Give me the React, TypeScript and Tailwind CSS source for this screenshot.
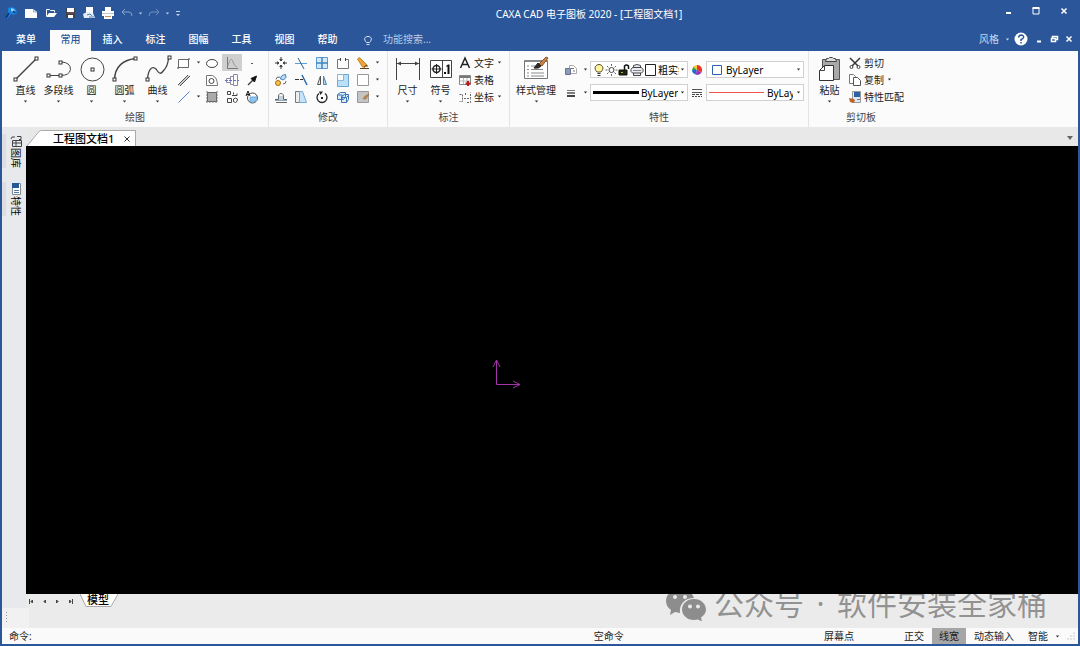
import { ReactNode } from 'react'
import clsx from 'clsx'

interface IconProps {
  w?: number
  h?: number
  children: ReactNode
}

// Base svg wrapper, one unit is one pixel
function Icon({ w = 14, h = 14, children }: IconProps) {
  return (
    <svg width={w} height={h} viewBox={`0 0 ${w} ${h}`} fill="none" stroke="#444" className="shrink-0" aria-hidden="true">
      {children}
    </svg>
  )
}

function Caret({ color = '#333' }: { color?: string }) {
  return (
    <Icon w={5} h={3}>
      <path d="M.8.5h3.400L2.500 2.500z" fill={color} stroke="none" />
    </Icon>
  )
}

/* Quick access icons */
const quickIcons: { name: string; width: string; icon: ReactNode }[] = [
  {
    name: 'CAXA',
    width: 'w-[18px]',
    icon: (
      <Icon>
        <path d="M4 2l4-1 4 2 1 4-3 2-3-1-3 4-2 1 2-6z" fill="#1583e0" stroke="none" />
        <path d="M7 2l3 1 1 2-2 1-2-1z" fill="#8fd0ff" stroke="none" />
        <path d="M2 12l3-5M9 5l2 2" stroke="#0a3577" strokeWidth="1.5" />
      </Icon>
    ),
  },
  {
    name: '新建',
    width: 'w-[22px]',
    icon: (
      <Icon>
        <path d="M1 3h8l4 3v6H1z" fill="#fff" stroke="none" />
        <path d="M9.500 3v3H13" stroke="#8fa9cf" />
      </Icon>
    ),
  },
  {
    name: '打开',
    width: 'w-[18px]',
    icon: (
      <Icon>
        <path d="M2.500 10V3.500h3l1 1h4v2" stroke="#fff" />
        <path d="M5 7h8l-3 4H2z" fill="#fff" stroke="none" />
      </Icon>
    ),
  },
  {
    name: '保存',
    width: 'w-[19px]',
    icon: (
      <Icon>
        <path d="M3 2h9v10H3z" fill="#3c4049" stroke="none" />
        <path d="M4 2h7v4H4z" fill="#fff" stroke="none" />
        <path d="M4 7h7" stroke="#93594e" />
        <path d="M5 9h5v3H5z" fill="#fff" stroke="none" />
      </Icon>
    ),
  },
  {
    name: '另存为',
    width: 'w-[19px]',
    icon: (
      <Icon>
        <path d="M4 1h7v8H4z" fill="#fff" stroke="none" />
        <path d="M1 8l4-2 6 1 2 5H2z" fill="#e4ecf9" stroke="none" />
        <path d="M5 9l3-1 2 2M7 11h5" stroke="#5b7fb5" />
      </Icon>
    ),
  },
  {
    name: '打印',
    width: 'w-[19px]',
    icon: (
      <Icon>
        <path d="M4 1h6v4H4zM1 5h12v5H1zM3 10h8v3H3z" fill="#fff" stroke="none" />
        <path d="M1 7h12v1H1z" fill="#bfc8d8" stroke="none" />
        <path d="M4 10.500h6" stroke="#c69258" />
      </Icon>
    ),
  },
  {
    name: '撤销',
    width: 'w-[19px]',
    icon: (
      <Icon>
        <path d="M5 3L2 6l3 3M2 6h7q3 0 3 4" stroke="#86a3ce" />
      </Icon>
    ),
  },
  { name: '撤销列表', width: 'w-[8px]', icon: <Caret color="#b9cae6" /> },
  {
    name: '重做',
    width: 'w-[19px]',
    icon: (
      <Icon>
        <path d="M9 3l3 3-3 3M12 6H5Q2 6 2 10" stroke="#6d8fc2" />
      </Icon>
    ),
  },
  { name: '重做列表', width: 'w-[8px]', icon: <Caret color="#b9cae6" /> },
  {
    name: '自定义',
    width: 'w-[13px]',
    icon: (
      <Icon w={6} h={8}>
        <path d="M1 2.500h4" stroke="#c9d6ec" />
        <path d="M1 5h4L3 7z" fill="#c9d6ec" stroke="none" />
      </Icon>
    ),
  },
]

/* Large drawing icons */
const node = (x: number, y: number) => <rect x={x - 1.5} y={y - 1.5} width="3" height="3" fill="#fff" stroke="#333" />

const drawTools = [
  {
    label: '直线',
    icon: (
      <Icon w={28} h={28}>
        <path d="M4 24L24 4" strokeWidth="1.500" />
        {node(3.5, 24.5)}
        {node(24.5, 3.5)}
      </Icon>
    ),
  },
  {
    label: '多段线',
    icon: (
      <Icon w={28} h={28}>
        <path d="M3.500 20.500h12q9 0 10-6 0-7-9-7.500" />
        {node(3.5, 20.5)}
        {node(15.5, 20.5)}
        {node(15.5, 7.5)}
      </Icon>
    ),
  },
  {
    label: '圆',
    icon: (
      <Icon w={28} h={28}>
        <circle cx="14.500" cy="14.500" r="11.500" />
        {node(14.5, 14.5)}
      </Icon>
    ),
  },
  {
    label: '圆弧',
    icon: (
      <Icon w={28} h={28}>
        <path d="M3.500 24.500C4 12 12 5 24.500 3.500" strokeWidth="1.500" />
        {node(3.5, 24.5)}
        {node(24.5, 3.5)}
      </Icon>
    ),
  },
  {
    label: '曲线',
    icon: (
      <Icon w={28} h={28}>
        <path d="M3.500 24.500C4 15 8 10 12 14c4 6 5 5 8 1 3-3 4-7 4.500-11.500" strokeWidth="1.300" />
        {node(3.5, 24.5)}
        {node(25.5, 2.5)}
      </Icon>
    ),
  },
]

interface SmallTool {
  name: string
  icon: ReactNode
  active?: boolean
}

const drawSmall: SmallTool[] = [
  { name: '矩形', icon: <Icon><path d="M1.500 3.500h10v8h-10z" fill="#fff" stroke="#666" /><path d="M12 2v2M1 11v2" /></Icon> },
  { name: '矩形选项', icon: <Caret /> },
  { name: '椭圆', icon: <Icon><ellipse cx="7" cy="7.500" rx="5.500" ry="4" fill="#fff" /></Icon> },
  { name: '公式曲线', active: true, icon: <Icon><path d="M2.500 1v11.500H13" stroke="#777" /><path d="M3 10C5 2 7 2 8 6q1 4 4 5" stroke="#999" /></Icon> },
  { name: '点', icon: <Icon><path d="M6 7h2v1H6z" fill="#555" stroke="none" /></Icon> },
  { name: '平行线', icon: <Icon><path d="M1 12L11 2M3 13L13 3" stroke="#555" /><path d="M2 12.500L12 2.500" stroke="#999" /></Icon> },
  { name: '', icon: null },
  { name: '等距线', icon: <Icon><path d="M1.500 12.500v-10h6q5 2 5 10z" fill="#fff" stroke="#777" /><circle cx="6.500" cy="8" r="2.500" /></Icon> },
  { name: '孔轴', icon: <Icon><path d="M1.500 5.500h4v4h-4zM5.500 3.500h3v8h-3zM8.500 1.500h4v11h-4z" fill="#fff" stroke="#8a8aa5" /><path d="M0 7.500h14" stroke="#6371c9" strokeDasharray="3 1" /></Icon> },
  { name: '箭头', icon: <Icon><path d="M3 12l5-5" strokeWidth="1.500" /><path d="M11.500 3l-2 6-3.500-3.500z" fill="#111" stroke="#111" /></Icon> },
  { name: '中心线', icon: <Icon><path d="M1.500 12.500l11-11" stroke="#4e82d4" /></Icon> },
  { name: '中心线选项', icon: <Caret /> },
  { name: '填充', icon: <Icon><path d="M2.500 2.500h9v9h-9z" fill="#aaa" stroke="#666" /><path d="M2 1v12M12 1v12M1 12h12" stroke="#777" strokeDasharray="2 1" /></Icon> },
  { name: '块', icon: <Icon><path d="M2.500 1.500h3v3h-3zM8.500 4.500v-2M7 5.500h5v-2M2.500 8.500h4v4h-4z" /><path d="M8.500 9q2-2 4 0 0 3-2 3.500-3 0-2-3.500z" /></Icon> },
  { name: '局部放大', icon: <Icon><circle cx="7.500" cy="8" r="5" fill="#fff" /><path d="M5 7h7v3l-4 2.500L5 11z" fill="#8cc5f3" stroke="#6da9dc" /><path d="M1 6l2-5 2 5M2 4.500h2" stroke="#111" /></Icon> },
]

const modifySmall: SmallTool[] = [
  { name: '平移', icon: <Icon><path d="M7 1v4M7 9v4M1 7h4M9 7h4" stroke="#333" /><path d="M5.500 3.500h3L7 5zM5.500 10.500h3L7 9zM3.500 5.500v3L5 7zM10.500 5.500v3L9 7z" fill="#333" stroke="#333" strokeWidth=".5" /></Icon> },
  { name: '裁剪', icon: <Icon><path d="M1 7.500h12" stroke="#5ba0dc" /><path d="M4 2l6 11" stroke="#345e87" /></Icon> },
  { name: '阵列', icon: <Icon><path d="M1.500 1.500h11v11h-11z" fill="#d4eafb" stroke="#5b9bd5" /><path d="M7 1v12M1 7h12" stroke="#4185bd" strokeWidth="1.500" /></Icon> },
  { name: '打断', icon: <Icon><path d="M4.500 3.500h-3v9h11v-9h-3" stroke="#777" /><path d="M4.500 2v3M9.500 2v3" stroke="#444" /></Icon> },
  { name: '删除', icon: <Icon><path d="M1.500 3l2-1.500 7 7-2 3-2-.500z" fill="#efa536" stroke="#c98225" /><path d="M8 11l3-2v2M4 12.500h9" stroke="#643f1a" /></Icon> },
  { name: '删除选项', icon: <Caret /> },
  { name: '复制', icon: <Icon><circle cx="4" cy="10" r="2.500" fill="#f9c34a" stroke="#a26b12" /><path d="M6.500 6q0-4 5-4.500 2 3-2 5.500z" fill="#b7dbf5" stroke="#4482ba" /><path d="M2 6.500q0-3 4-2.500M9 11q3 0 3-3" stroke="#666" /></Icon> },
  { name: '延伸', icon: <Icon><path d="M1 6.500h4M6 6.500h3" stroke="#333" /><path d="M8 2l5 10" stroke="#2c6daa" strokeWidth="1.500" /></Icon> },
  { name: '镜像', icon: <Icon><path d="M5.500 3v8.500h-3z" fill="#e6e9ec" stroke="#555" /><path d="M8.500 3v8.500h3z" fill="#a7d2f3" stroke="#5486ad" /></Icon> },
  { name: '缩放', icon: <Icon><path d="M1.500 1.500h11v12h-11z" fill="#b9e1fa" stroke="#6ea6cf" /><path d="M1.500 1.500h6v6h-6z" fill="#f7fbfe" stroke="#8cb6d4" /></Icon> },
  { name: '分解', icon: <Icon><path d="M1.500 1.500h11v11h-11z" fill="#fff" stroke="#999" /></Icon> },
  { name: '分解选项', icon: <Caret /> },
  { name: '偏移', icon: <Icon><path d="M1 9.500h3.500V8Q4 3.500 7 3.500T9.500 8v1.500H13M2 12.500h11" stroke="#666" /><path d="M6 6v4M8 6v4M1 10.500h12" stroke="#8ba7c3" /></Icon> },
  { name: '拉伸', icon: <Icon><path d="M1.500 1.500h4v11h-4z" stroke="#777" fill="#eee" /><path d="M5.500 1.500h3l4 11h-7z" fill="#c6e5fa" stroke="#73a9d4" /></Icon> },
  { name: '旋转', icon: <Icon><path d="M4 3.500a5 5 0 1 0 6 0" stroke="#222" strokeWidth="1.300" /><path d="M4 1.500h4L5.500 5z" fill="#222" stroke="none" /><path d="M6 7h2v2H6z" fill="#222" stroke="none" /></Icon> },
  { name: '三维', icon: <Icon><path d="M1.500 4.500l3-2h5v4l-2 3h-6zM5.500 6.500l3-2h4v5l-2 3h-5z" fill="#d8ecfb" stroke="#3c74b4" /><path d="M5.500 7.500h5v5M10.500 7.500l2-2M2 5h4v4" stroke="#3c74b4" /></Icon> },
  { name: '编辑填充', icon: <Icon><path d="M1.500 1.500h11v11h-11z" fill="#c4c4c4" stroke="#999" /><path d="M7 9l2-3 4-2-3 5z" fill="#b98a4f" stroke="#906a3b" strokeWidth=".5" /></Icon> },
  { name: '编辑填充选项', icon: <Caret /> },
]

function ToolGrid({ tools, cols }: { tools: SmallTool[]; cols: string }) {
  return (
    <div className={clsx('grid auto-rows-[17px] content-start', cols)}>
      {tools.map((tool, i) =>
        tool.icon ? (
          <button key={i} aria-label={tool.name} className={clsx('flex items-center justify-center', tool.active && 'bg-[#cfcfcf]')}>
            {tool.icon}
          </button>
        ) : (
          <span key={i} />
        )
      )}
    </div>
  )
}

function BigButton({ label, icon, width = 'w-[33px]' }: { label: string; icon: ReactNode; width?: string }) {
  return (
    <button className={clsx('flex flex-col items-center whitespace-nowrap', width)}>
      <span className="flex h-[29px] items-center">{icon}</span>
      <span className="h-[14px] leading-[14px]">{label}</span>
      <span className="pt-[3px]">
        <Caret />
      </span>
    </button>
  )
}

function RowButton({ label, icon, caret }: { label: string; icon: ReactNode; caret?: boolean }) {
  return (
    <button className="flex h-[17px] items-center gap-[3px] whitespace-nowrap">
      {icon}
      <span>{label}</span>
      {caret && <Caret />}
    </button>
  )
}

function Group({ title, width, children }: { title: string; width: string; children: ReactNode }) {
  return (
    <section className={clsx('flex shrink-0 flex-col border-r border-[#e4e4e4] pt-[3px]', width)}>
      <div className="flex h-[56px]">{children}</div>
      <h2 className="text-center leading-[14px] text-[#444]">{title}</h2>
    </section>
  )
}

interface ComboProps {
  label: string
  value: string
  lead: ReactNode
  pad?: string
}

function Combo({ label, value, lead, pad = 'gap-[4px]' }: ComboProps) {
  return (
    <label className={clsx('flex h-[17px] w-[98px] items-center border border-[#d0d0d0] bg-white px-[2px]', pad)}>
      {lead}
      <select aria-label={label} className="min-w-0 flex-1 appearance-none overflow-hidden bg-transparent text-[10px] text-black outline-none">
        <option>{value}</option>
      </select>
      <Caret />
    </label>
  )
}

const layerState = (
  <div className="flex shrink-0 items-center">
    <Icon w={12}>
      <path d="M4 9C0 5 3 1.500 6 1.500S12 5 8 9z" fill="#fff3a2" stroke="#5b5426" />
      <path d="M4.500 10.500h3M4.500 12.500h3" stroke="#333" />
    </Icon>
    <Icon w={13}>
      <circle cx="6.500" cy="7" r="2.500" />
      <path d="M6.500 1v2M6.500 11v2M.500 7h2M10.500 7h2M2 3l1.500 1.500M11 3L9.500 4.500M2 11l1.500-1.500M11 11L9.500 9.500" stroke="#666" />
    </Icon>
    <Icon w={12}>
      <path d="M1 7h8v5H1z" fill="#1c240b" stroke="#111" />
      <path d="M6.500 7V3q2-2 4 0v3" stroke="#111" strokeWidth="1.500" />
      <path d="M3 9h2v1H3z" fill="#a5b43e" stroke="none" />
    </Icon>
    <Icon w={14}>
      <path d="M3.500 5V2.500q3.500-2 7 0V5M3.500 9.500v3h7v-3" fill="#e9edf3" />
      <path d="M2.500 4.500h9l1.500 2v2l-1.500 1.500h-9L1 8.500v-2z" fill="#e9edf3" />
      <path d="M3 7.500h8" stroke="#888" />
    </Icon>
    <Icon w={13}>
      <path d="M1.500 1.500h10v11h-10z" fill="#fff" stroke="#222" />
    </Icon>
  </div>
)

const menuTabs = ['插入', '标注', '图幅', '工具', '视图', '帮助']

function TitleBar() {
  return (
    <div className="flex h-[29px] items-start text-white">
      <div className="flex h-[26px] items-center">
        {quickIcons.map((q) => (
          <button key={q.name} aria-label={q.name} className={clsx('flex items-center justify-center', q.width)}>
            {q.icon}
          </button>
        ))}
      </div>
      <h1 className="flex-1 text-center text-[10px] leading-[29px]">CAXA CAD 电子图板 2020 - [工程图文档1]</h1>
      <div className="flex h-[22px]">
        <button aria-label="最小化" className="flex w-[28px] items-center justify-center">
          <Icon w={10} h={10}><path d="M3 7h5" stroke="#fff" strokeWidth="2" /></Icon>
        </button>
        <button aria-label="最大化" className="flex w-[28px] items-center justify-center">
          <Icon w={10} h={10}><path d="M2 2h6v6H2z" stroke="#fff" /><path d="M1.500 2h7" stroke="#fff" strokeWidth="2" /></Icon>
        </button>
        <button aria-label="关闭" className="flex w-[28px] items-center justify-center">
          <Icon w={10} h={10}><path d="M2.500 2.500l5 5M7.500 2.500l-5 5" stroke="#fff" strokeWidth="1.500" /></Icon>
        </button>
      </div>
    </div>
  )
}

function MenuBar() {
  return (
    <nav className="flex h-[22px] text-white">
      <button className="w-[48px] pb-[2px] font-medium">菜单</button>
      <button className="mt-[1px] w-[41px] bg-[#fbfbfb] pb-[3px] font-medium text-[#2b579a]">常用</button>
      {menuTabs.map((tab) => (
        <button key={tab} className="w-[43px] pb-[2px] font-medium">{tab}</button>
      ))}
      <label className="flex flex-1 items-center pb-[2px] pl-[13px]">
        <Icon w={12}>
          <path d="M4.500 10.500C1 7 3 4.500 6 4.500s5 2.500 1.500 6zM4.500 12.500h3" stroke="#d9e3f2" />
        </Icon>
        <input
          aria-label="功能搜索"
          placeholder="功能搜索..."
          className="ml-[9px] w-[90px] bg-transparent text-[10px] outline-none placeholder:text-[#b9cae6]"
        />
      </label>
      <div className="flex items-center pr-[4px] pb-[2px]">
        <button className="flex items-center gap-[6px] text-[#c9d6ec]">
          风格
          <Caret color="#c9d6ec" />
        </button>
        <button aria-label="帮助主题" className="ml-[4px]">
          <Icon>
            <circle cx="7" cy="7" r="6.500" fill="#fff" stroke="none" />
            <path d="M4.500 5.500Q5 3 7.500 3q2.500.500 2 2.500Q9 7 7 7.500V9M7 10v1.500" stroke="#2b579a" strokeWidth="1.500" />
          </Icon>
        </button>
        <button aria-label="最小化文档" className="ml-[6px]">
          <Icon w={10} h={10}><path d="M3 7.500h4" stroke="#fff" strokeWidth="2" /></Icon>
        </button>
        <button aria-label="还原文档" className="ml-[5px]">
          <Icon w={10} h={10}><path d="M3.500 4V2.500h5v3H7M2.500 4.500h4v3h-4z" stroke="#fff" strokeWidth="1.500" /></Icon>
        </button>
        <button aria-label="关闭文档" className="ml-[5px]">
          <Icon w={10} h={10}><path d="M2.500 2.500l5 5M7.500 2.500l-5 5" stroke="#fff" strokeWidth="1.500" /></Icon>
        </button>
      </div>
    </nav>
  )
}

function Ribbon() {
  return (
    <div className="flex h-[76px] bg-[#fbfbfb] text-[#222]">
      <Group title="绘图" width="w-[267px]">
        <div className="flex pl-[7px]">
          {drawTools.map((tool) => (
            <BigButton key={tool.label} {...tool} />
          ))}
        </div>
        <ToolGrid tools={drawSmall} cols="grid-cols-[20px_8px_20px_20px_20px]" />
      </Group>

      <Group title="修改" width="w-[119px]">
        <div className="pl-[2px]">
          <ToolGrid tools={modifySmall} cols="grid-cols-[20px_20px_22px_20px_20px_8px]" />
        </div>
      </Group>

      <Group title="标注" width="w-[122px]">
        <div className="flex pl-[3px]">
          <BigButton
            label="尺寸"
            icon={
              <Icon w={28} h={28}>
                <path d="M2.500 3v22M25.500 3v22M3 8.500h22" />
                <path d="M3 8.500l4-2v4zM25 8.500l-4-2v4z" fill="#444" stroke="none" />
              </Icon>
            }
          />
          <BigButton
            label="符号"
            icon={
              <Icon w={24} h={20}>
                <path d="M1.500 1.500h21v17h-21zM13.500 1.500v17" fill="#fff" />
                <circle cx="7.500" cy="10" r="3.500" stroke="#222" strokeWidth="1.500" />
                <path d="M2.500 10h10M7.500 5v10" stroke="#222" />
                <path d="M15 13h2v2h-2zM17 7l2-1.500h1.500V15h-2V7.500H17z" fill="#111" stroke="none" />
              </Icon>
            }
          />
        </div>
        <div className="flex flex-col pl-[2px]">
          <RowButton label="文字" caret icon={<Icon w={12}><path d="M1.500 12L6 2l4.500 10M3.500 8.500h5" stroke="#222" strokeWidth="1.500" /></Icon>} />
          <RowButton
            label="表格"
            icon={
              <Icon w={12}>
                <path d="M.500 2.500h11v9H.500z" fill="#fff" stroke="#888" />
                <path d="M1 3h10v2H1z" fill="#777" stroke="none" />
                <path d="M1 8h10M4.500 5v6M8 5v6" stroke="#bbb" />
                <path d="M9 8v5M6.500 10.500h5" stroke="#c3151b" strokeWidth="2" />
              </Icon>
            }
          />
          <RowButton label="坐标" caret icon={<Icon w={12}><path d="M.500 4.500h3v7h-3M6.500 3v3M5 8.500h6.500v-6M8 12.500h3.500v-3" stroke="#666" strokeDasharray="2 1" /></Icon>} />
        </div>
      </Group>

      <Group title="特性" width="w-[299px]">
        <div className="pl-[2px]">
          <BigButton
            label="样式管理"
            width="w-[48px]"
            icon={
              <Icon w={28} h={28}>
                <path d="M2.500 5.500h23v18h-23z" fill="#fff" stroke="#777" />
                <path d="M3 6h22" stroke="#888" strokeWidth="2" />
                <path d="M5 11h2M5 14.500h2M5 18h2M5 21h2M9 11h7M9 14.500h12M9 18h13M9 21h13" stroke="#888" />
                <path d="M24 2l2 1-6 8-3-2z" fill="#c98541" stroke="#8d5423" />
                <path d="M16 8l3 3q-2 3-7 2z" fill="#2f2a27" stroke="#222" />
              </Icon>
            }
          />
        </div>
        <div className="grid auto-rows-[23px] grid-cols-[21px_9px_98px_18px_98px] content-start items-center justify-items-center pt-[4px]">
          <button aria-label="图层">
            <Icon>
              <path d="M5.500 2.500h4l3 3v5h-7z" fill="#fff" stroke="#aaa" />
              <path d="M1.500 5.500h5v6h-5z" fill="#8b9bb8" stroke="#66748f" />
              <path d="M7 5.500h3M9 8h2" stroke="#777" />
            </Icon>
          </button>
          <button aria-label="图层选项"><Caret /></button>
          <Combo label="当前图层" value="粗实线层" lead={layerState} pad="gap-[1px]" />
          <button aria-label="颜色">
            <Icon w={12} h={12}>
              <path d="M6 6V1a5 5 0 0 1 4.500 7.500z" fill="#e9342c" stroke="none" />
              <path d="M6 6l4.500 2.500a5 5 0 0 1-6 2z" fill="#9439bd" stroke="none" />
              <path d="M6 6l-1.500 4.500A5 5 0 0 1 1 6z" fill="#2166d1" stroke="none" />
              <path d="M6 6H1l1.500-3.500z" fill="#33a446" stroke="none" />
              <path d="M6 6L2.500 2.500A5 5 0 0 1 6 1z" fill="#f8c928" stroke="none" />
            </Icon>
          </button>
          <Combo
            label="当前颜色"
            value="ByLayer"
            lead={<Icon w={13} h={12}><path d="M3.500 1.500h9v9h-9z" fill="#fff" stroke="#2b62b2" /></Icon>}
          />
          <button aria-label="线型"><Icon w={8} h={10}><path d="M0 2.500h8" stroke="#777" /><path d="M0 5h8" stroke="#555" strokeWidth="1.500" /><path d="M0 8h8" strokeWidth="2" /></Icon></button>
          <button aria-label="线型选项"><Caret /></button>
          <Combo label="当前线型" value="ByLayer" lead={<span className="h-[3px] w-[46px] shrink-0 bg-black" />} pad="gap-[2px]" />
          <button aria-label="线宽"><Icon w={10} h={10}><path d="M0 1.500h10M0 4.500h10" stroke="#555" /><path d="M0 6.500h10" strokeDasharray="3 1" /><path d="M0 8.500h10" strokeDasharray="2 1" /></Icon></button>
          <Combo label="当前线宽" value="ByLayer" lead={<span className="h-px w-[55px] shrink-0 bg-[#f0564f]" />} pad="gap-[3px]" />
        </div>
      </Group>

      <section className="w-[104px] pt-[3px]">
        <div className="flex h-[56px] pl-[4px]">
          <BigButton
            label="粘贴"
            icon={
              <Icon w={22} h={28}>
                <path d="M3.500 4.500h17v20h-17z" fill="#a9a9a9" stroke="#555" />
                <path d="M6.500 6.500l1-3h2l1-1h3l1 1h2l1 3z" fill="#ddd" stroke="#444" />
                <path d="M5.500 10.500h9v15h-14v-10z" fill="#fff" stroke="#333" />
                <path d="M5.500 10.500v5h-5" />
              </Icon>
            }
          />
          <div className="flex flex-col pl-[3px]">
            <RowButton label="剪切" icon={<Icon w={12}><path d="M1 2l8 8M11 2l-8 8" stroke="#333" strokeWidth="1.500" /><circle cx="2.500" cy="11" r="1.500" /><circle cx="9.500" cy="11" r="1.500" /></Icon>} />
            <RowButton label="复制" caret icon={<Icon w={12}><path d="M.500 1.500h4l2 2v7h-6z" fill="#fff" stroke="#777" /><path d="M4.500 4.500h4l3 3v5h-7z" fill="#fff" stroke="#555" /></Icon>} />
            <RowButton
              label="特性匹配"
              icon={
                <Icon w={12}>
                  <path d="M3.500 1.500h8v11h-8z" fill="#dfe9f5" stroke="#999" />
                  <path d="M5 2h6v5H5z" fill="#2c62a8" stroke="none" />
                  <path d="M8 9.500h3" stroke="#777" />
                  <path d="M0 8l5 1 1 2-2 2-3-1z" fill="#b9672d" stroke="none" />
                </Icon>
              }
            />
          </div>
        </div>
        <h2 className="text-center leading-[14px] text-[#444]">剪切板</h2>
      </section>
    </div>
  )
}

function SidePanel() {
  return (
    <aside className="flex w-[24px] shrink-0 flex-col gap-[14px] bg-[#e7e9ed] pt-[7px]">
      <button className="flex w-full flex-col items-center border-l-4 border-[#dcdee2]">
        <Icon w={12}>
          <path d="M1 5q0-3 4-2M7 2.500h4v3H9M2.500 6.500h9v6h-9zM3 9h8M6 7v5" stroke="#444" />
        </Icon>
        <span className="[text-orientation:sideways] [writing-mode:vertical-rl]">图库</span>
      </button>
      <button className="flex w-full flex-col items-center border-l-4 border-[#dcdee2]">
        <Icon w={12}>
          <path d="M2.500 1.500h8v11h-8z" fill="#fff" stroke="#888" />
          <path d="M2 1h7v5H2z" fill="#245a96" stroke="none" />
          <path d="M4 8.500h5M4 10.500h5" stroke="#4a7db3" />
        </Icon>
        <span className="[text-orientation:sideways] [writing-mode:vertical-rl]">特性</span>
      </button>
    </aside>
  )
}

function DocumentTabs() {
  return (
    <div className="flex h-[19px] items-end justify-between bg-[#e8e8e8] pr-[4px]">
      <div className="flex h-[16px]">
        <svg width="16" height="16" viewBox="0 0 16 16" aria-hidden="true">
          <path d="M1 16L13 1.500Q14 .500 16 .500V16z" fill="#fff" />
          <path d="M1 16L13 1.500Q14 .500 16 .500" fill="none" stroke="#aaa" />
        </svg>
        <div className="flex items-center gap-[8px] border-t border-r border-[#aaa] bg-white pr-[3px] pl-[11px]">
          <span className="text-[11px] leading-[12px] font-medium text-black">工程图文档1</span>
          <button aria-label="关闭工程图文档1">
            <Icon w={10} h={10}><path d="M2.500 2.500l5 5M7.500 2.500l-5 5" stroke="#333" /></Icon>
          </button>
        </div>
      </div>
      <button aria-label="文档列表" className="pb-[6px]">
        <Icon w={8} h={4}><path d="M1 0h6L4 4z" fill="#666" stroke="none" /></Icon>
      </button>
    </div>
  )
}

function ModelTabs() {
  return (
    <div className="flex h-[14px] bg-[#ebebeb]">
      <div className="flex items-center pl-[2px]">
        {['M1.500 1v5M4.500 2v3L3 3.500z', 'M4.500 2v3L3 3.500z', 'M2.500 2v3L4 3.500z', 'M2.500 2v3L4 3.500zM5.500 1v5'].map((d, i) => (
          <button key={d} aria-label={['首页', '上一页', '下一页', '末页'][i]} className="w-[13px]">
            <Icon w={7} h={7}><path d={d} fill="#333" /></Icon>
          </button>
        ))}
      </div>
      <button className="flex h-[13px] items-center text-[11px] font-medium text-black">
        <svg width="7" height="13" viewBox="0 0 7 13" aria-hidden="true">
          <path d="M0 0h7v13z" fill="#fff" />
          <path d="M0 0l6 12.500h1" fill="none" stroke="#aaa" />
        </svg>
        <span className="h-[13px] border-b border-[#aaa] bg-white leading-[12px]">模型</span>
        <svg width="9" height="13" viewBox="0 0 9 13" aria-hidden="true">
          <path d="M9 0H0v13h2z" fill="#fff" />
          <path d="M9 0L2 12.500H0" fill="none" stroke="#aaa" />
        </svg>
      </button>
    </div>
  )
}

function ChannelMark() {
  return (
    <div className="pointer-events-none absolute top-[-11px] right-[31px] flex items-center text-[30px] leading-[42px] whitespace-nowrap text-black/40">
      <svg width="42" height="34" viewBox="0 0 42 34" className="mr-[7px]" fill="currentColor" fillRule="evenodd" aria-hidden="true">
        <path d="M15 2C7 2 1 7 1 14c0 4 2 7 5 9l-1 5 5-3 5 1C14 17 20 11 29 11 27 5 22 2 15 2zM8 10a2 2 0 1 0 4 0 2 2 0 1 0-4 0zM18 10a2 2 0 1 0 4 0 2 2 0 1 0-4 0z" />
        <path d="M29 12c-7 0-12 5-12 10.500S22 33 29 33l4-.500 4 2-1-4c3-2 5-5 5-8C41 17 36 12 29 12zM23 19.500a2 2 0 1 0 4 0 2 2 0 1 0-4 0zM31 19.500a2 2 0 1 0 4 0 2 2 0 1 0-4 0z" />
      </svg>
      <span>公众号</span>
      <span className="w-[33px] text-center">·</span>
      <span>软件安装全家桶</span>
    </div>
  )
}

function StatusBar() {
  return (
    <footer className="flex h-[16px] items-center bg-[#fafafa] text-[#222]">
      <span className="w-[55%] pl-[7px]">命令:</span>
      <span className="flex-1">空命令</span>
      <div className="flex items-center pr-[2px]">
        <span className="w-[72px]">屏幕点</span>
        <button className="w-[36px]">正交</button>
        <button className="h-[16px] w-[34px] bg-[#a6a6a6]">线宽</button>
        <button className="w-[56px]">动态输入</button>
        <button className="flex w-[44px] items-center justify-center gap-[7px]">
          智能
          <Caret />
        </button>
        <Icon w={10} h={10}>
          <path d="M8 1v2M5 4v2M8 4v2M2 7v2M5 7v2M8 7v2" stroke="#ccc" />
        </Icon>
      </div>
    </footer>
  )
}

export default function App() {
  return (
    <div className="flex h-screen flex-col overflow-hidden border-x-2 border-b-2 border-[#2b579a] bg-[#ebebeb] font-['Noto_Sans','Noto_Sans_CJK_SC',sans-serif] text-[10px] leading-[14px]">
      <header className="bg-[#2b579a]">
        <TitleBar />
        <MenuBar />
      </header>
      <Ribbon />
      <div className="flex min-h-0 flex-1">
        <SidePanel />
        <main className="flex min-w-0 flex-1 flex-col">
          <DocumentTabs />
          {/* Drawing area with the origin marker */}
          <div className="relative flex-1 bg-black">
            <svg width="32" height="30" viewBox="0 0 32 30" className="absolute top-[47.5%] left-[44.2%]" fill="none" stroke="#a235a8" aria-hidden="true">
              <path d="M5.500 1v24.500H29M2 8l3.500-7L9 8M22 22l7 3.500-7 3.500" />
            </svg>
          </div>
        </main>
      </div>
      <div className="relative">
        <div className="flex">
          <div className="w-[24px] bg-[#e7e9ed]" />
          <div className="flex-1">
            <ModelTabs />
          </div>
        </div>
        <div className="flex h-[20px] bg-[#ebebeb]">
          <div className="flex w-[27px] items-center bg-[#f1f1f1] pl-[3px]">
            <Icon w={3} h={14}><path d="M1.500 1v12" stroke="#999" strokeDasharray="1 2" /></Icon>
          </div>
        </div>
        <ChannelMark />
      </div>
      <StatusBar />
    </div>
  )
}
